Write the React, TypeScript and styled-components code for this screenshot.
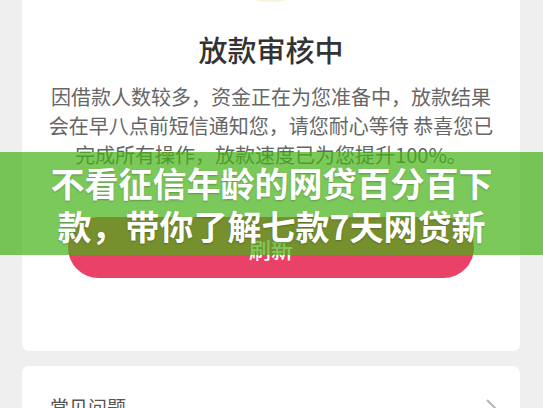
import React, { FC } from 'react';
import styled, { createGlobalStyle } from 'styled-components';

const GlobalStyle = createGlobalStyle`
  html, body {
    margin: 0;
    padding: 0;
    background: #efefef;
  }
  body {
    font-family: "Noto Sans CJK SC", "Noto Sans", sans-serif;
  }
`;

const Page = styled.div`
  position: relative;
  width: 543px;
  height: 408px;
  overflow: hidden;
  background: #efefef;
  padding: 0 23px 0 22px;
  box-sizing: border-box;
`;

const Card = styled.div<{ $top?: number }>`
  background: #fff;
  border-radius: 7px;
  margin-top: ${(p) => p.$top ?? 0}px;
  display: flex;
  flex-direction: column;
  align-items: center;
`;

const StatusCard = styled(Card)`
  padding: 0 46px 73px;
`;

const IconWrap = styled.div`
  width: 100%;
  height: 80px;
  display: flex;
  justify-content: center;
`;

const Title = styled.h1`
  margin: 26px 0 0;
  font-size: 29px;
  line-height: 40px;
  font-weight: 500;
  color: #333;
`;

const Message = styled.p`
  margin: 13px -26px 0;
  font-size: 20px;
  line-height: 29px;
  color: #666;
  text-align: center;
  white-space: nowrap;
`;

const RefreshButton = styled.button`
  margin-top: 48px;
  width: 100%;
  height: 61px;
  border: none;
  border-radius: 31px;
  background: #ea4169;
  color: #fff;
  font-family: inherit;
  font-size: 22px;
  font-weight: 500;
`;

const FaqCard = styled(Card)`
  flex-direction: row;
  justify-content: space-between;
  align-items: flex-start;
  padding: 27px 23px 20px 28px;
`;

const FaqTitle = styled.span`
  font-size: 19px;
  line-height: 28px;
  color: #555;
`;

const Chevron = styled.svg`
  margin-top: 5px;
`;

const Banner = styled.div`
  position: absolute;
  left: 0;
  right: 0;
  top: 152px;
  height: 103px;
  background: rgba(69, 178, 22, 0.7);
  display: flex;
  flex-direction: column;
  align-items: center;
  justify-content: center;
`;

const BannerText = styled.div`
  font-size: 34px;
  line-height: 43px;
  font-weight: 700;
  color: #fff;
  text-align: center;
  white-space: nowrap;
  text-shadow: 0 1px 2px rgba(0, 0, 0, 0.25);
`;

const App: FC = () => {
  return (
    <>
      <GlobalStyle />
      <Page>
        <StatusCard $top={-77}>
          <IconWrap>
            <svg width="140" height="80" viewBox="0 0 140 80">
              <circle cx="70" cy="11" r="68" fill="#f8f4dc" />
            </svg>
          </IconWrap>
          <Title>放款审核中</Title>
          <Message>
            因借款人数较多，资金正在为您准备中，放款结果
            <br />
            会在早八点前短信通知您，请您耐心等待 恭喜您已
            <br />
            完成所有操作，放款速度已为您提升100%。
          </Message>
          <RefreshButton>刷新</RefreshButton>
        </StatusCard>
        <FaqCard $top={15}>
          <FaqTitle>常见问题</FaqTitle>
          <Chevron width="12" height="20" viewBox="0 0 12 20">
            <path d="M2 2 L10 10 L2 18" fill="none" stroke="#b5b5b5" strokeWidth="2" />
          </Chevron>
        </FaqCard>
        <Banner>
          <BannerText>不看征信年龄的网贷百分百下</BannerText>
          <BannerText>款，带你了解七款7天网贷新</BannerText>
        </Banner>
      </Page>
    </>
  );
};

export default App;
